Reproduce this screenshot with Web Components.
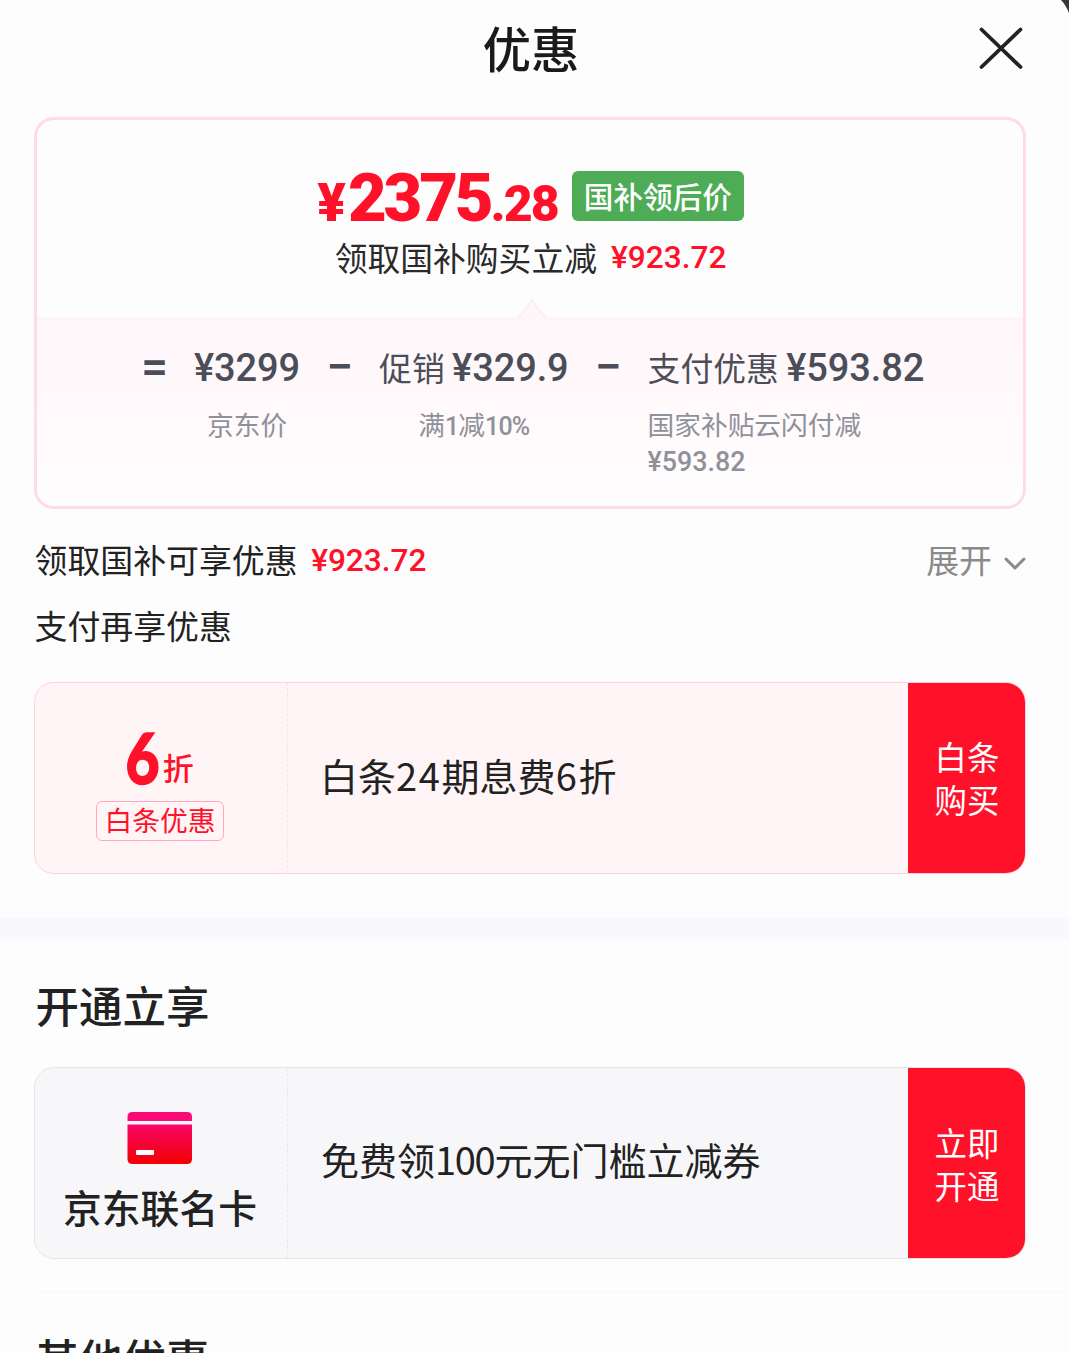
<!DOCTYPE html>
<html lang="zh-CN"><head><meta charset="utf-8"><title>优惠</title>
<style>
html,body{margin:0;padding:0;background:#fdfdfe}
body{width:1069px;height:1353px;overflow:hidden;position:relative;font-family:"Noto Sans CJK SC",Roboto,sans-serif;color:#1a1a1a}
</style></head><body>
<sheet-header>优惠</sheet-header>
<price-card></price-card>
<promo-lines></promo-lines>
<coupon-card action1="白条" action2="购买">
  <discount-badge slot="left"></discount-badge>
  白条<span style="letter-spacing:1.7px">24</span>期息费<span style="letter-spacing:1.7px">6</span>折
</coupon-card>
<band-gap></band-gap>
<section-title>开通立享</section-title>
<coupon-card tone="gray" action1="立即" action2="开通">
  <card-brand slot="left"></card-brand>
  免费领<span style="letter-spacing:-1.300px">100</span>元无门槛立减券
</coupon-card>
<section-rule></section-rule>
<section-title>其他优惠</section-title>
<script>
const NUM='Roboto,"Noto Sans CJK SC",sans-serif';
function def(name,html){
  customElements.define(name,class extends HTMLElement{
    connectedCallback(){
      if(this.shadowRoot)return;
      const r=this.attachShadow({mode:'open'});
      r.innerHTML=typeof html==='function'?html(this):html;
    }
  });
}
def('sheet-header',`<style>
:host{display:flex;height:97px;align-items:center;justify-content:center;position:relative}
.t{font-size:48.500px;font-weight:500;line-height:1;color:#1a1a1a;margin:0 7px 2px 0}
svg{position:absolute;left:978px;top:26px}
.c{position:absolute;left:1059px;top:0}
</style><span class="t"><slot></slot></span>
<svg width="46" height="46" viewBox="0 0 46 46" fill="none" stroke="#222" stroke-width="3.800" stroke-linecap="round"><path d="M3.500 3.500L42.500 41M42.500 3.500L3.500 41"/></svg>
<svg class="c" width="10" height="14" viewBox="0 0 10 14"><path d="M2 0H10V13C8 8 5 3 2 0Z" fill="#3a3632"/></svg>`);

def('price-card',`<style>
:host{display:block;margin:20px 43px 0 34px;border:3px solid #ffdbe7;border-radius:20px;overflow:hidden;background:#fdfdfe;font-family:"Noto Sans CJK SC",sans-serif}
.up{height:198px;box-sizing:border-box;padding-top:50px;display:flex;flex-direction:column;align-items:center;position:relative}
.p{display:flex;align-items:flex-start;height:53px;margin-left:1px}
.amt{font-family:${NUM};font-weight:900;color:#ff1229;display:flex;align-items:baseline;line-height:56px;height:53px}
.y{font-size:53px;margin-right:2px}
.big{font-size:67px;letter-spacing:-3.200px}
.sm{font-size:50px;letter-spacing:-1.900px}
.tag{margin-left:14px;margin-top:1px;width:172px;height:50px;box-sizing:border-box;background:#4fac56;color:#fff;border-radius:6px;font-size:29.600px;font-weight:500;text-align:center;line-height:50px}
.s{display:flex;align-items:center;margin-top:9px;margin-left:1px;font-size:32.800px;line-height:48px;color:#2a2a2a}
.s b{font:500 31.600px/48px ${NUM};color:#ff1229;margin-left:14px;padding-top:2px}
.tri{position:absolute;left:480px;bottom:-1px}
.down{height:188px;box-sizing:border-box;border-top:1px solid #ffeef3;background:linear-gradient(#fff6f8,#fffdfe);display:flex;gap:28px;padding:24px 0 0 106px;color:#4b4e58}
.op{font:500 48px/48px ${NUM};width:23px;text-align:center;flex:none;display:flex;justify-content:center}
.col{flex:none;display:flex;flex-direction:column;text-align:center}
.col.l{text-align:left}
.v{font-size:32.800px;line-height:48px;white-space:nowrap}
.v b{font:500 38px/48px ${NUM};letter-spacing:-.1px}
.n{font-size:26.700px;line-height:35px;color:#8f919a;margin-top:14px;white-space:nowrap}
.n b{font:500 25px/35px ${NUM};letter-spacing:-.8px}
.n2{color:#8f919a;white-space:nowrap;line-height:35px;font-size:26.700px;margin-top:1px}
.n2 b{font:500 26.800px/35px ${NUM}}
</style>
<div class="up">
  <div class="p"><div class="amt"><span class="y">¥</span><span class="big">2375</span><span class="sm">.28</span></div><div class="tag">国补领后价</div></div>
  <div class="s">领取国补购买立减<b>¥923.72</b></div>
  <svg class="tri" width="30" height="20" viewBox="0 0 30 20"><path d="M1 20L15 1L29 20" fill="#fff6f8" stroke="#ffe9ef" stroke-width="1.500"/></svg>
</div>
<div class="down">
  <span class="op">=</span>
  <div class="col"><div class="v"><b>¥3299</b></div><div class="n">京东价</div></div>
  <span class="op">−</span>
  <div class="col"><div class="v">促销 <b>¥329.9</b></div><div class="n">满<b>1</b>减<b>10%</b></div></div>
  <span class="op">−</span>
  <div class="col l"><div class="v">支付优惠 <b>¥593.82</b></div><div class="n">国家补贴云闪付减</div><div class="n2"><b>¥593.82</b></div></div>
</div>`);

def('promo-lines',`<style>
:host{display:block;margin:0 43px 0 34.500px;font-size:32.900px;color:#222;font-family:"Noto Sans CJK SC",sans-serif}
.r{display:flex;align-items:center;height:48px}
.r1{margin-top:25px}
.r2{margin-top:18px}
b{font:500 31.600px/48px ${NUM};color:#ff1229;margin-left:13.500px;padding-top:6px}
.more{margin-left:auto;color:#8a8a8a;display:flex;align-items:center}
svg{margin-left:12px;margin-top:12px}
</style>
<div class="r r1"><span>领取国补可享优惠</span><b>¥923.72</b><span class="more">展开<svg width="22" height="14" viewBox="0 0 22 14" fill="none" stroke="#8a8a8a" stroke-width="3" stroke-linecap="round" stroke-linejoin="round"><path d="M2 2L11 11L20 2"/></svg></span></div>
<div class="r r2">支付再享优惠</div>`);

def('coupon-card',h=>{
 const g=h.getAttribute('tone')==='gray';
 return `<style>
:host{display:flex;margin:${g?38:34}px 43px 0 34px;height:192px;box-sizing:border-box;border-radius:20px;overflow:hidden;border:1px solid ${g?'#e6e6e9':'#ffd2dc'};background:${g?'#f7f7fa':'#fff5f7'};font-family:"Noto Sans CJK SC",sans-serif}
.l{width:253px;flex:none;box-sizing:border-box;border-right:1px dashed ${g?'#e9e9ed':'#ffe0e8'};display:flex;align-items:center;justify-content:center;padding-right:2px}
.m{flex:1;display:flex;align-items:center;padding:0 0 ${g?8:6}px ${g?33:32}px;font-size:38px;line-height:48px;color:#222;white-space:nowrap}
.a{width:118px;flex:none;margin:-1px -1px -1px 0;background:#ff1229;color:#fff;font-size:32.400px;line-height:43px;display:flex;flex-direction:column;align-items:center;justify-content:center;box-sizing:border-box;padding-bottom:${g?1:2}px;border-radius:0 20px 20px 0}
</style><div class="l"><slot name="left"></slot></div><div class="m"><div><slot></slot></div></div><div class="a"><span>${h.getAttribute('action1')}</span><span>${h.getAttribute('action2')}</span></div>`;
});

def('discount-badge',`<style>
:host{display:flex;flex-direction:column;align-items:center;margin-top:18px}
.n{display:flex;align-items:baseline;color:#ff1229;height:68px}
i{display:inline-block;font:900 70px/70px Lato,Roboto,sans-serif;-webkit-text-stroke:1.500px #ff1229;transform:scaleX(.84);transform-origin:right center;font-style:normal;margin-left:-7px;position:relative;top:-11px}
u{text-decoration:none;font:500 31px/40px "Noto Sans CJK SC",sans-serif;margin-left:3px;position:relative;top:-15px}
.t{width:128px;height:40px;box-sizing:border-box;border:1px solid #ffa9ba;border-radius:6px;color:#ff1229;font-size:27.800px;line-height:35px;text-align:center;white-space:nowrap}
</style><div class="n"><i>6</i><u>折</u></div><div class="t">白条优惠</div>`);

def('card-brand',`<style>
:host{display:flex;flex-direction:column;align-items:center;margin-top:14px}
svg{display:block;margin-bottom:17px}
.t{font-size:38.800px;font-weight:500;line-height:48px;color:#222;white-space:nowrap}
</style><svg width="66" height="54" viewBox="0 0 66 54"><defs><linearGradient id="g" x1="0" y1="0" x2="0" y2="1"><stop offset="0" stop-color="#f8056a"/><stop offset="1" stop-color="#f20000"/></linearGradient></defs><path d="M.500 10V6Q.500 1 5.500 1H60Q65 1 65 6V10Z" fill="#f90a78"/><path d="M.500 13.500H65V48Q65 53 60 53H5.500Q.500 53 .500 48Z" fill="url(#g)"/><rect x="9" y="39" width="18" height="5" rx="1" fill="#fff"/></svg><div class="t">京东联名卡</div>`);

def('band-gap',`<style>:host{display:block;height:22px;margin-top:44px;background:#f8f9fc}</style>`);
def('section-title',`<style>
:host{display:block;margin:41px 0 0 35.500px;font-size:43.500px;font-weight:500;line-height:48px;color:#222;white-space:nowrap}
</style><slot></slot>`);
def('section-rule',`<style>:host{display:block;height:1px;margin:33px 0 0 34px;background:#f8f8f8}</style>`);
</script>
</body></html>
